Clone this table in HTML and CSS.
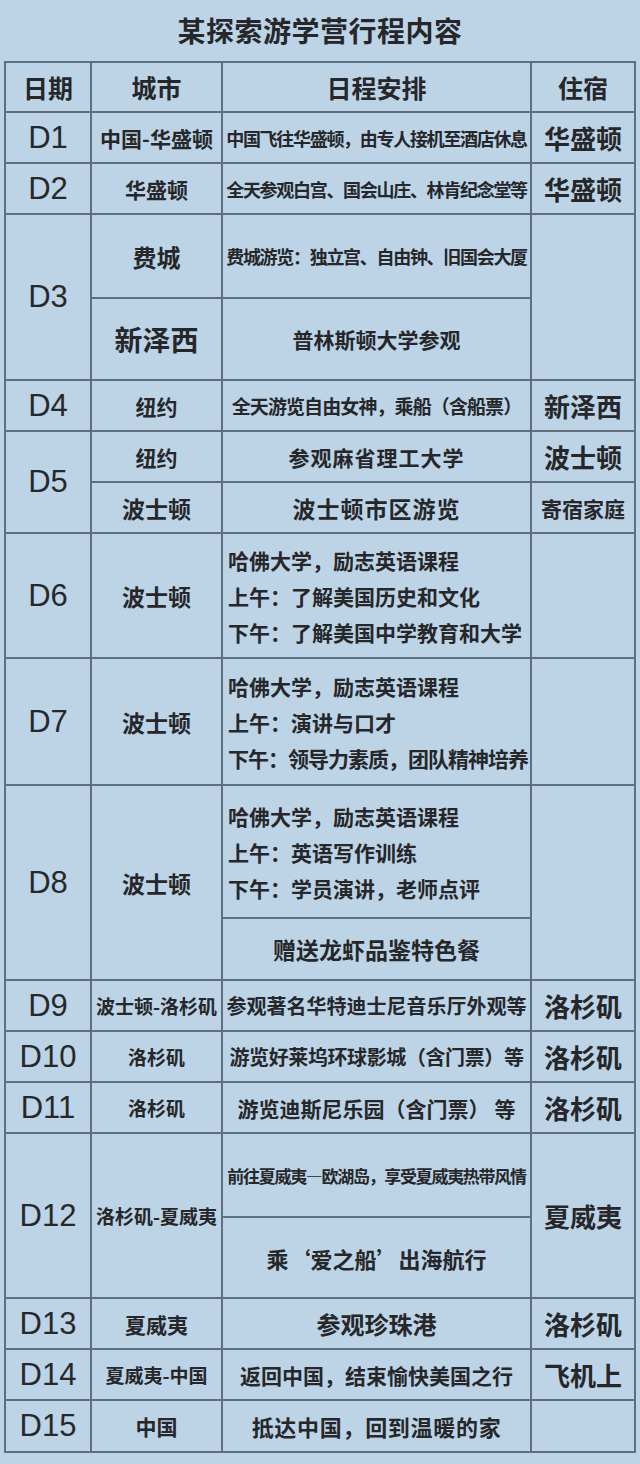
FILE: index.html
```html
<!DOCTYPE html>
<html lang="zh-CN">
<head>
<meta charset="utf-8">
<title>某探索游学营行程内容</title>
<link rel="stylesheet" href="styles.css">
</head>
<body>
<div class="page">
  <h1 class="title">某探索游学营行程内容</h1>
  <div class="table">
    <div class="cell head">日期</div>
    <div class="cell head">城市</div>
    <div class="cell head">日程安排</div>
    <div class="cell head">住宿</div>

    <div class="cell day">D1</div>
    <div class="cell f21">中国-华盛顿</div>
    <div class="cell long18">中国飞往华盛顿，由专人接机至酒店休息</div>
    <div class="cell stay">华盛顿</div>

    <div class="cell day">D2</div>
    <div class="cell f21">华盛顿</div>
    <div class="cell long18">全天参观白宫、国会山庄、林肯纪念堂等</div>
    <div class="cell stay">华盛顿</div>

    <div class="cell day span2">D3</div>
    <div class="cell f24">费城</div>
    <div class="cell long18">费城游览：独立宫、自由钟、旧国会大厦</div>
    <div class="cell stay span2"></div>
    <div class="cell f28">新泽西</div>
    <div class="cell f21">普林斯顿大学参观</div>

    <div class="cell day">D4</div>
    <div class="cell f21">纽约</div>
    <div class="cell long19">全天游览自由女神，乘船（含船票）</div>
    <div class="cell stay">新泽西</div>

    <div class="cell day span2">D5</div>
    <div class="cell f21">纽约</div>
    <div class="cell f21 wide">参观麻省理工大学</div>
    <div class="cell stay">波士顿</div>
    <div class="cell f23">波士顿</div>
    <div class="cell f23 wide">波士顿市区游览</div>
    <div class="cell f21">寄宿家庭</div>

    <div class="cell day">D6</div>
    <div class="cell f23">波士顿</div>
    <div class="cell lines">
      <span>哈佛大学，励志英语课程</span>
      <span>上午：了解美国历史和文化</span>
      <span>下午：了解美国中学教育和大学</span>
    </div>
    <div class="cell stay"></div>

    <div class="cell day">D7</div>
    <div class="cell f23">波士顿</div>
    <div class="cell lines">
      <span>哈佛大学，励志英语课程</span>
      <span>上午：演讲与口才</span>
      <span class="tight">下午：领导力素质，团队精神培养</span>
    </div>
    <div class="cell stay"></div>

    <div class="cell day span2">D8</div>
    <div class="cell f23 span2">波士顿</div>
    <div class="cell lines">
      <span>哈佛大学，励志英语课程</span>
      <span>上午：英语写作训练</span>
      <span>下午：学员演讲，老师点评</span>
    </div>
    <div class="cell stay span2"></div>
    <div class="cell f23">赠送龙虾品鉴特色餐</div>

    <div class="cell day">D9</div>
    <div class="cell f19">波士顿-洛杉矶</div>
    <div class="cell f20">参观著名华特迪士尼音乐厅外观等</div>
    <div class="cell stay">洛杉矶</div>

    <div class="cell day">D10</div>
    <div class="cell f19">洛杉矶</div>
    <div class="cell long20">游览好莱坞环球影城（含门票）等</div>
    <div class="cell stay">洛杉矶</div>

    <div class="cell day">D11</div>
    <div class="cell f19">洛杉矶</div>
    <div class="cell f21">游览迪斯尼乐园（含门票） 等</div>
    <div class="cell stay">洛杉矶</div>

    <div class="cell day span2">D12</div>
    <div class="cell f19 span2">洛杉矶-夏威夷</div>
    <div class="cell long17">前往夏威夷—欧湖岛，享受夏威夷热带风情</div>
    <div class="cell stay span2">夏威夷</div>
    <div class="cell f22">乘‘爱之船’出海航行</div>

    <div class="cell day">D13</div>
    <div class="cell f21">夏威夷</div>
    <div class="cell f24">参观珍珠港</div>
    <div class="cell stay">洛杉矶</div>

    <div class="cell day">D14</div>
    <div class="cell f19">夏威夷-中国</div>
    <div class="cell f21">返回中国，结束愉快美国之行</div>
    <div class="cell stay">飞机上</div>

    <div class="cell day">D15</div>
    <div class="cell f21">中国</div>
    <div class="cell f22 airy">抵达中国，回到温暖的家</div>
    <div class="cell stay"></div>
  </div>
</div>
</body>
</html>
```
FILE: styles.css
```css
html, body {
  margin: 0;
  padding: 0;
  background: #bdd3e6;
}

.page {
  width: 640px;
  height: 1464px;
  background: #bdd3e6;
  color: #25272a;
  font-family: "Noto Sans CJK SC", "Liberation Sans", sans-serif;
}

.title {
  margin: 0;
  height: 61px;
  line-height: 60px;
  text-align: center;
  font-size: 28px;
  font-weight: 700;
  letter-spacing: 0.5px;
}

.table {
  margin-left: 4px;
  padding: 2px;
  box-sizing: content-box;
  width: 628px;
  display: grid;
  grid-template-columns: 84px 129px 307px 102px;
  grid-template-rows: 48px 49px 49px 82px 80px 49px 49px 49px 123px 125px 131px 60px 49px 49px 49px 82px 79px 49px 49px 50px;
  gap: 2px;
  background: #5f6f80;
}

.cell {
  background: #bdd3e6;
  display: flex;
  align-items: center;
  justify-content: center;
  text-align: center;
  font-weight: 700;
  white-space: nowrap;
  overflow: hidden;
}

.span2 {
  grid-row: span 2;
}

.head {
  font-size: 25px;
}

.day {
  font-family: "Liberation Sans", Arial, sans-serif;
  font-weight: 400;
  font-size: 31px;
  color: #26292c;
}

.stay {
  font-size: 26px;
}

.f19 { font-size: 19px; }
.f20 { font-size: 20px; }
.f21 { font-size: 21px; }
.f22 { font-size: 22px; }
.f23 { font-size: 23px; }
.f24 { font-size: 24px; }
.f28 { font-size: 28px; }

.long17 { font-size: 17px; letter-spacing: -1.3px; }
.long18 { font-size: 18px; letter-spacing: -1.3px; }
.long19 { font-size: 19px; letter-spacing: -0.9px; }
.long20 { font-size: 20px; letter-spacing: -0.4px; }

.wide { letter-spacing: 1px; }
.airy { letter-spacing: 0.7px; }

.lines {
  flex-direction: column;
  align-items: flex-start;
  justify-content: center;
  text-align: left;
  padding-left: 5px;
  font-size: 21px;
  line-height: 36px;
}

.lines span {
  display: block;
}

.lines .tight {
  letter-spacing: -1px;
}
```
